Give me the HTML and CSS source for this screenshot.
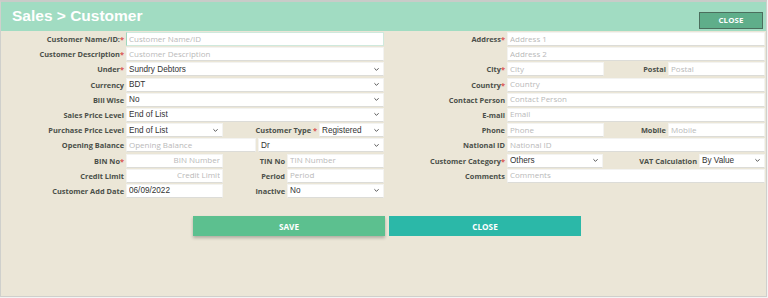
FILE: index.html
```
<!DOCTYPE html>
<html>
<head>
<meta charset="utf-8">
<link rel="stylesheet" href="styles.css">
</head>
<body>
<div class="panel">
  <div class="panel-head">
    <h1 class="title">Sales &gt; Customer</h1>
    <button class="btn-top">CLOSE</button>
  </div>
  <div class="form">
    <div class="col col-left">
      <div class="row"><label class="lbl">Customer Name/ID:<span class="req">*</span></label><input class="fld w-full focus" placeholder="Customer Name/ID"></div>
      <div class="row"><label class="lbl">Customer Description<span class="req">*</span></label><input class="fld w-full" placeholder="Customer Description"></div>
      <div class="row"><label class="lbl">Under<span class="req">*</span></label><select class="fld sel w-full"><option>Sundry Debtors</option></select></div>
      <div class="row"><label class="lbl">Currency</label><select class="fld sel w-full"><option>BDT</option></select></div>
      <div class="row"><label class="lbl">Bill Wise</label><select class="fld sel w-full"><option>No</option></select></div>
      <div class="row"><label class="lbl">Sales Price Level</label><select class="fld sel w-full"><option>End of List</option></select></div>
      <div class="row"><label class="lbl">Purchase Price Level</label><select class="fld sel w-97"><option>End of List</option></select><label class="lbl lbl-flex">Customer Type <span class="req">*</span></label><select class="fld sel w-65"><option>Registered</option></select></div>
      <div class="row"><label class="lbl">Opening Balance</label><input class="fld w-130" placeholder="Opening Balance"><select class="fld sel w-126"><option>Dr</option></select></div>
      <div class="row"><label class="lbl">BIN No<span class="req">*</span></label><input class="fld w-97 ra" placeholder="BIN Number"><label class="lbl lbl-flex">TIN No</label><input class="fld w-97" placeholder="TIN Number"></div>
      <div class="row"><label class="lbl">Credit Limit</label><input class="fld w-97 ra" placeholder="Credit Limit"><label class="lbl lbl-flex">Period</label><input class="fld w-97" placeholder="Period"></div>
      <div class="row"><label class="lbl">Customer Add Date</label><input class="fld w-97" value="06/09/2022"><label class="lbl lbl-flex">Inactive</label><select class="fld sel w-97"><option>No</option></select></div>
    </div>
    <div class="col col-right">
      <div class="row"><label class="lbl lbl-r">Address<span class="req">*</span></label><input class="fld w-full" placeholder="Address 1"></div>
      <div class="row"><label class="lbl lbl-r"></label><input class="fld w-full" placeholder="Address 2"></div>
      <div class="row"><label class="lbl lbl-r">City<span class="req">*</span></label><input class="fld w-97" placeholder="City"><label class="lbl lbl-flex">Postal</label><input class="fld w-97" placeholder="Postal"></div>
      <div class="row"><label class="lbl lbl-r">Country<span class="req">*</span></label><input class="fld w-full" placeholder="Country"></div>
      <div class="row"><label class="lbl lbl-r">Contact Person</label><input class="fld w-full" placeholder="Contact Person"></div>
      <div class="row"><label class="lbl lbl-r">E-mail</label><input class="fld w-full" placeholder="Email"></div>
      <div class="row"><label class="lbl lbl-r">Phone</label><input class="fld w-97" placeholder="Phone"><label class="lbl lbl-flex">Mobile</label><input class="fld w-97" placeholder="Mobile"></div>
      <div class="row"><label class="lbl lbl-r">National ID</label><input class="fld w-full" placeholder="National ID"></div>
      <div class="row"><label class="lbl lbl-r">Customer Category<span class="req">*</span></label><select class="fld sel w-96"><option>Others</option></select><label class="lbl lbl-flex">VAT Calculation</label><select class="fld sel w-66"><option>By Value</option></select></div>
      <div class="row"><label class="lbl lbl-r">Comments</label><input class="fld w-full" placeholder="Comments"></div>
    </div>
  </div>
  <div class="actions">
    <button class="btn btn-save">SAVE</button>
    <button class="btn btn-close">CLOSE</button>
  </div>
</div>
</body>
</html>
```
FILE: styles.css
```
* { box-sizing: border-box; }
html, body { margin: 0; padding: 0; background: #f4f4f4; }
body { width: 768px; height: 298px; overflow: hidden; }

.panel {
  width: 767px;
  height: 297px;
  background: #ebe6d7;
  border: 1px solid #cfd0cc;
  border-top: 2px solid #c9cbc8;
  display: flex;
  flex-direction: column;
}

.panel-head {
  height: 29px;
  background: #a1dcc2;
  display: flex;
  align-items: center;
  justify-content: space-between;
  padding: 0 3px 0 11px;
}
.title {
  margin: 0;
  font-family: "Liberation Sans", Arial, sans-serif;
  font-weight: bold;
  font-size: 15.5px;
  color: #ffffff;
  margin-top: -2px;
}
.btn-top {
  width: 64px;
  height: 17px;
  margin-top: 7px;
  background: #5fae8a;
  border: 1px solid #4b6e5d;
  color: #fff;
  font-family: "Open Sans", sans-serif;
  font-weight: 700;
  font-size: 7.8px;
  letter-spacing: 0.2px;
  padding: 0;
}

.form {
  display: flex;
  padding-top: 1px;
}
.col { display: flex; flex-direction: column; }
.col-left { width: 383px; }
.col-right { width: 381px; }

.row {
  display: flex;
  align-items: center;
  height: 14px;
  margin-bottom: 1.2px;
  gap: 2px;
}

.lbl {
  flex: none;
  width: 123px;
  text-align: right;
  font-family: "Open Sans", sans-serif;
  font-weight: 700;
  font-size: 7.4px;
  color: #4a4f49;
  white-space: nowrap;
  line-height: 14px;
}
.lbl-r { width: 121px; }
.lbl-flex { flex: 1; width: auto; }
.req { color: #d9534f; }

.fld {
  flex: none;
  height: 14px;
  background: #fff;
  border: 1px solid #f3f3f1;
  border-bottom-color: #dcdcd8;
  border-radius: 0;
  padding: 0 2px;
  margin: 0;
  font-family: "Liberation Sans", Arial, sans-serif;
  font-size: 8.2px;
  color: #333;
  outline: none;
}
.fld::placeholder {
  font-family: "Open Sans", sans-serif;
  color: #b9b9b9;
  font-size: 8px;
}
.focus { border-color: #cfe9dd; border-left-color: #9fd6bd; }
.ra { text-align: right; }

.sel {
  -webkit-appearance: none;
  appearance: none;
  padding: 0 12px 0 2px;
  background: #fff url("data:image/svg+xml;utf8,<svg xmlns='http://www.w3.org/2000/svg' width='8' height='6' viewBox='0 0 8 6'><path d='M1.5 1.5 L4 4 L6.5 1.5' fill='none' stroke='%23555' stroke-width='1.2'/></svg>") no-repeat right 3px center;
  background-size: 7px 5px;
}

.w-full { width: 258px; }
.w-97 { width: 97px; }
.w-96 { width: 96px; }
.w-65 { width: 65px; }
.w-66 { width: 66px; }
.w-130 { width: 130px; }
.w-126 { width: 126px; }

.actions {
  display: flex;
  gap: 4px;
  padding-left: 192px;
  margin-top: 17px;
}
.btn {
  width: 192px;
  height: 20px;
  border: none;
  color: #fff;
  font-family: "Open Sans", sans-serif;
  font-weight: 700;
  font-size: 8.2px;
  padding: 0;
}
.btn-save { background: #5cc08f; box-shadow: 0 2px 3px rgba(0,0,0,0.25); }
.btn-close { background: #2bb8a8; }
```
